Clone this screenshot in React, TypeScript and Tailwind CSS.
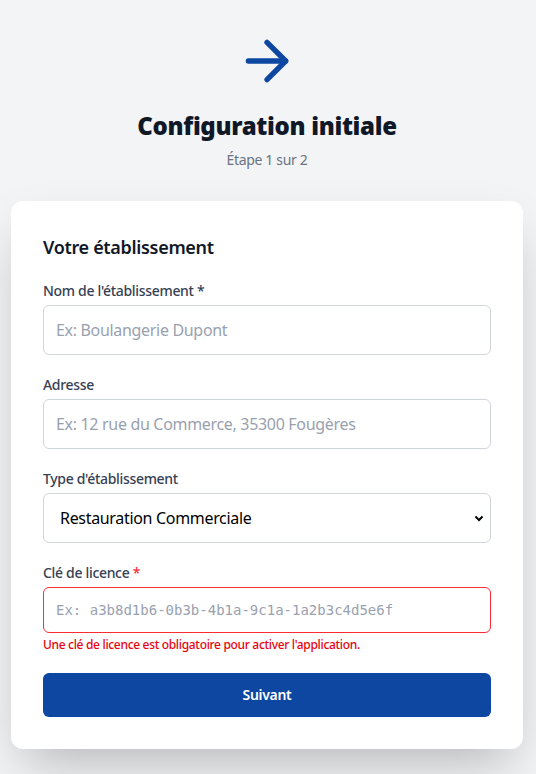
import React from "react";
import { ArrowRight } from "lucide-react";

const font = { fontFamily: '"Noto Sans", "Open Sans", sans-serif' };

const App: React.FC = () => {
  return (
    <div
      className="min-h-screen bg-gray-100 flex flex-col items-center pt-[29px] pb-8 pl-[11px] pr-[13px] tracking-[-0.02em]"
      style={font}
    >
      <ArrowRight className="w-16 h-16 text-[#0d47a1]" strokeWidth={2} />
      <h1 className="mt-[17px] text-2xl font-black text-gray-900 leading-8">
        Configuration initiale
      </h1>
      <p className="mt-2 text-sm text-gray-500">Étape 1 sur 2</p>

      <div className="mt-[31px] w-full max-w-lg bg-white rounded-xl shadow-2xl p-8">
        <h2 className="text-lg font-semibold text-gray-900 mb-5">
          Votre établissement
        </h2>

        <div className="space-y-5">
          <div>
            <label className="block text-sm font-medium text-gray-700 mb-1">
              Nom de l'établissement *
            </label>
            <input
              type="text"
              placeholder="Ex: Boulangerie Dupont"
              className="w-full px-3 py-3 border border-gray-300 rounded-md text-base placeholder-gray-400 focus:outline-none"
            />
          </div>

          <div>
            <label className="block text-sm font-medium text-gray-700 mb-1">
              Adresse
            </label>
            <input
              type="text"
              placeholder="Ex: 12 rue du Commerce, 35300 Fougères"
              className="w-full px-3 py-3 border border-gray-300 rounded-md text-base placeholder-gray-400 focus:outline-none"
            />
          </div>

          <div>
            <label className="block text-sm font-medium text-gray-700 mb-1">
              Type d'établissement
            </label>
            <div className="relative">
              <select
                defaultValue="rc"
                className="w-full appearance-none pl-4 pr-10 py-3 border border-gray-300 rounded-md text-base text-black bg-white focus:outline-none"
              >
                <option value="rc">Restauration Commerciale</option>
                <option value="rco">Restauration Collective</option>
                <option value="bo">Boulangerie</option>
              </select>
              <svg
                className="absolute right-[6px] top-1/2 -translate-y-1/2 w-3 h-3 pointer-events-none"
                viewBox="0 0 12 12"
                fill="none"
                stroke="black"
                strokeWidth={2}
              >
                <path d="M2.5 4.5 6 8l3.5-3.5" />
              </svg>
            </div>
          </div>

          <div>
            <label className="block text-sm font-medium text-gray-700 mb-1">
              Clé de licence <span className="text-red-500">*</span>
            </label>
            <input
              type="text"
              placeholder="Ex: a3b8d1b6-0b3b-4b1a-9c1a-1a2b3c4d5e6f"
              className="w-full px-3 py-3 border border-red-500 rounded-md text-sm tracking-normal placeholder-gray-400 focus:outline-none"
              style={{ fontFamily: '"DejaVu Sans Mono", "Liberation Mono", monospace' }}
            />
            <p className="mt-1 text-xs font-medium text-red-600">
              Une clé de licence est obligatoire pour activer l'application.
            </p>
          </div>

          <button
            type="button"
            className="w-full py-3 rounded-md bg-[#0d47a1] text-white text-sm font-semibold"
          >
            Suivant
          </button>
        </div>
      </div>
    </div>
  );
};

export default App;
